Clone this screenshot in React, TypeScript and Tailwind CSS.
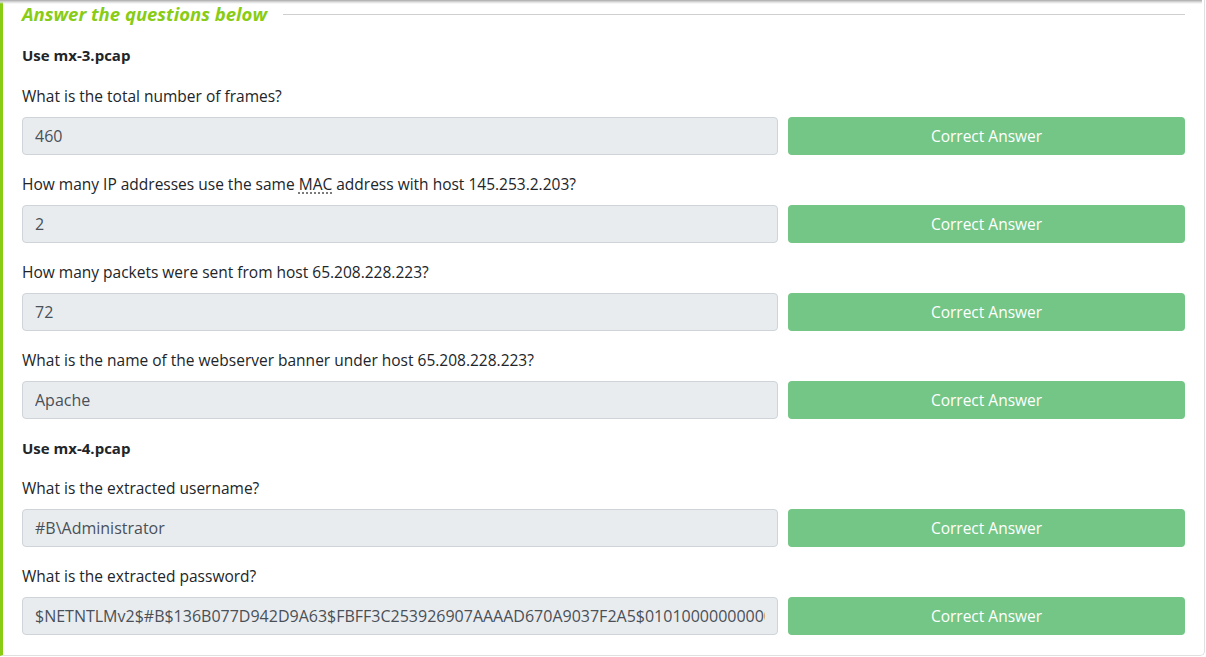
const sections = [
  {
    title: "Use mx-3.pcap",
    questions: [
      { q: "What is the total number of frames?", a: "460" },
      { q: "How many IP addresses use the same |MAC| address with host 145.253.2.203?", a: "2" },
      { q: "How many packets were sent from host 65.208.228.223?", a: "72" },
      { q: "What is the name of the webserver banner under host 65.208.228.223?", a: "Apache" },
    ],
  },
  {
    title: "Use mx-4.pcap",
    questions: [
      { q: "What is the extracted username?", a: "#B\\Administrator" },
      {
        q: "What is the extracted password?",
        a: "$NETNTLMv2$#B$136B077D942D9A63$FBFF3C253926907AAAAD670A9037F2A5$0101000000000000A0FB1A0A0A0A0A0A",
      },
    ],
  },
]

function Question({ text }: { text: string }) {
  // "|MAC|" marks an abbreviation with a dotted underline
  const parts = text.split("|")
  return (
    <p className="text-[15.5px] leading-6 text-[#212529]">
      {parts.map((part, i) =>
        i % 2 === 1 ? (
          <abbr key={i} className="underline decoration-dotted decoration-[#555] underline-offset-[3px]">
            {part}
          </abbr>
        ) : (
          <span key={i}>{part}</span>
        )
      )}
    </p>
  )
}

export default function App() {
  return (
    <div
      className="relative h-[657px] w-[1206px] overflow-hidden bg-white"
      style={{ fontFamily: '"Open Sans", "Noto Sans", Arial, sans-serif' }}
    >
      <div className="absolute left-0 right-[4px] top-0 h-[4px] bg-gradient-to-b from-[#a8a8a8] via-[#dcdcdc] to-transparent" />
      <div className="h-[656px] w-[1205px] rounded-br-[5px] border-b border-l-[3px] border-r border-b-[#e0e0e0] border-l-[#88cc14] border-r-[#e0e0e0] px-[19px] pt-[2px]">
        <div className="flex h-6 items-center gap-4">
          <h2 className="text-[18.5px] font-bold italic leading-6 text-[#88cc14]">Answer the questions below</h2>
          <div className="h-px flex-1 bg-[#cfcfcf]" />
        </div>

        {sections.map((section, s) => (
          <div key={section.title}>
            <p className="mt-[17px] text-[15px] font-bold leading-6 text-[#212529]">{section.title}</p>
            {section.questions.map((item, i) => (
              <div key={item.q} className={s === 1 && i === 0 ? "mt-[16px]" : "mt-[17px]"}>
                <Question text={item.q} />
                <div className="mt-[9px] flex gap-[10px]">
                  <input
                    readOnly
                    value={item.a}
                    className="h-[38px] w-[756px] rounded-[4px] border border-[#ced4da] bg-[#e9ecef] px-3 text-[16px] text-[#495057] outline-none"
                  />
                  <button className="h-[38px] flex-1 rounded-[4px] bg-[#73c686] pt-px text-[15.5px] text-white">
                    Correct Answer
                  </button>
                </div>
              </div>
            ))}
          </div>
        ))}
      </div>
    </div>
  )
}
